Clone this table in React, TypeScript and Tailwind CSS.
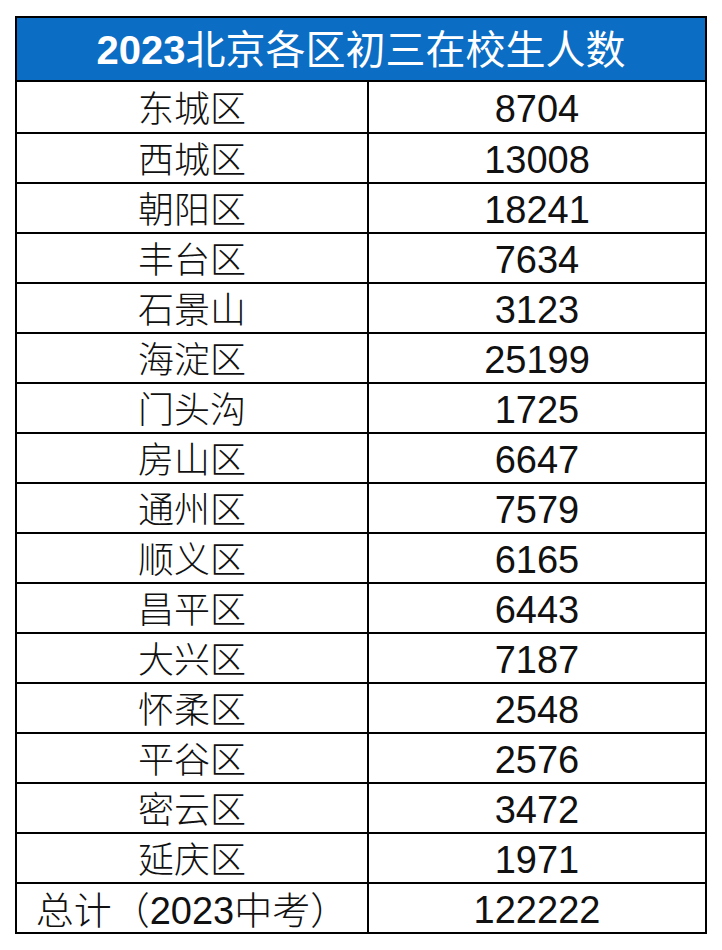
import React from "react";

const rows: [string, string][] = [
  ["东城区", "8704"],
  ["西城区", "13008"],
  ["朝阳区", "18241"],
  ["丰台区", "7634"],
  ["石景山", "3123"],
  ["海淀区", "25199"],
  ["门头沟", "1725"],
  ["房山区", "6647"],
  ["通州区", "7579"],
  ["顺义区", "6165"],
  ["昌平区", "6443"],
  ["大兴区", "7187"],
  ["怀柔区", "2548"],
  ["平谷区", "2576"],
  ["密云区", "3472"],
  ["延庆区", "1971"],
];

const cjk = { fontFamily: '"Liberation Sans", "Noto Sans CJK SC", sans-serif' };

export default function App() {
  return (
    <div className="w-[722px] h-[950px] bg-white pt-[16px] pl-[15px]" style={cjk}>
      <div className="w-[692px] border-2 border-black flex flex-col">
        <div className="h-[64px] bg-[#0b6dc3] border-b-2 border-black flex items-center justify-center text-white text-[40px] leading-none pt-[2px]">
          <span className="font-bold">2023</span>
          <span>北京各区初三在校生人数</span>
        </div>
        {rows.map(([name, num], i) => (
          <div key={i} className={"flex h-[50px] " + (i > 0 ? "border-t-2 border-black" : "")}>
            <div className="w-[352px] border-r-2 border-black flex items-center justify-center pt-[5px] text-[36px] font-light text-[#111] leading-none">
              {name}
            </div>
            <div className="flex-1 flex items-center justify-center pt-[4px] text-[38px] text-[#111] leading-none">
              {num}
            </div>
          </div>
        ))}
        <div className="flex h-[50px] border-t-2 border-black">
          <div className="w-[352px] border-r-2 border-black flex items-center justify-center pt-[5px] text-[38px] font-light text-[#111] leading-none">
            总计（2023中考）
          </div>
          <div className="flex-1 flex items-center justify-center pt-[4px] text-[38px] text-[#111] leading-none">
            122222
          </div>
        </div>
      </div>
    </div>
  );
}
